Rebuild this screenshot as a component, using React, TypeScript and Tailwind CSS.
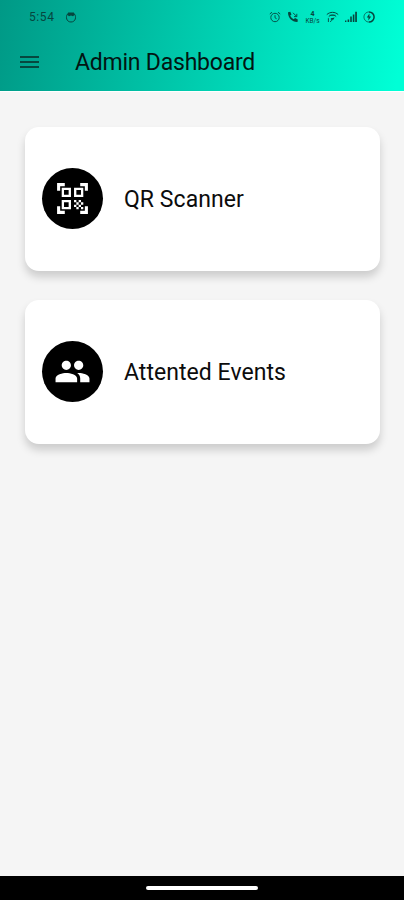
import React from 'react';
import { MdPeople, MdQrCodeScanner } from 'react-icons/md';

const StatusBar: React.FC = () => (
  <div className="flex h-[34px] items-center justify-between pl-[29px] pr-[29px] text-[#06463e]">
    <div className="flex items-center">
      <span className="w-[36px] text-[12px] leading-none tracking-[0.6px]">5:54</span>
      <svg className="h-3 w-3" viewBox="0 0 12 12" fill="none" stroke="currentColor">
        <path d="M2.4 3.2C.6 5.6 1.2 11 6 11s5.4-5.4 3.6-7.8" />
        <path d="M2 3.4 3.2 1.4h5.6L10 3.4 8 5.2 6 4.4 4 5.2z" fill="currentColor" stroke="none" />
      </svg>
    </div>
    <div className="flex items-center gap-[6px]">
      {/* Alarm */}
      <svg className="h-3 w-3" viewBox="0 0 12 12" fill="none" stroke="currentColor" strokeWidth="0.9">
        <circle cx="6" cy="6.5" r="4.2" />
        <path d="M.8 3 3 1.2M11.2 3 9 1.2M6 4.2v2.6l1.6.9" />
      </svg>
      {/* Call */}
      <svg className="h-3 w-3" viewBox="0 0 12 12" fill="none" stroke="currentColor">
        <path d="M1 1.2 3.3.8l1.2 2.6-1.3 1.2c.8 1.7 1.9 2.8 3.5 3.7l1.4-1.2 2.7 1.3-.3 2.6C5.2 11.2.8 6.6 1 1.2z" fill="currentColor" stroke="none" />
        <path d="M6 1.8 9.6 5.4M9.8 2.8v2.8H7" strokeWidth="0.9" />
      </svg>
      {/* Network speed */}
      <div className="flex w-[15px] flex-col items-center leading-none">
        <span className="text-[7px] leading-[7px] font-bold">4</span>
        <span className="text-[6.5px] leading-[6px]">KB/s</span>
      </div>
      {/* Wi-Fi */}
      <svg className="h-3 w-[13px]" viewBox="0 0 13 12" fill="none" stroke="currentColor">
        <path d="M.8 3.6C4 .6 9 .6 12.2 3.6M2.8 5.6c2.2-2 5.2-2 7.4 0" />
        <path d="M3.6 4.2h5.8" strokeWidth="0.8" />
        <path d="M2.4 7.2v3.8M5.4 7v2.6L4.2 11" strokeWidth="0.9" />
        <path d="M5.6 7.2 8.6 6.6 6.8 9.4z" fill="currentColor" stroke="none" />
      </svg>
      {/* Signal */}
      <svg className="h-3 w-3" viewBox="0 0 12 12" fill="currentColor">
        <path d="M0 9.6h1.4V11H0zM2.6 8.4h1.6V11H2.6zM5.2 5.6h1.6V11H5.2zM7.8 3.4h1.6V11H7.8zM10.2.8h1.7V11h-1.7z" />
      </svg>
      {/* Battery */}
      <svg className="h-3 w-3" viewBox="0 0 12 12" fill="none" stroke="currentColor" strokeWidth="1.5">
        <path d="M6 .9a5.1 5.1 0 1 1 0 10.2" />
        <path d="M6 11.1A5.1 5.1 0 0 1 6 .9" strokeWidth="0.7" />
        <path d="M6.4 2.6 3.8 6.4h1.7l-.2 3 2.9-4H6.4z" fill="currentColor" stroke="none" />
      </svg>
    </div>
  </div>
);

const Header: React.FC = () => (
  <header className="h-[91px] shrink-0 bg-[linear-gradient(100deg,#009986_0%,#00ffd6_98%)]">
    <StatusBar />
    <div className="flex h-[56px] items-center pl-5">
      <div className="flex w-[55px] flex-col gap-[3px]">
        <span className="h-[2px] w-[19px] bg-[#06483f]" />
        <span className="h-[2px] w-[19px] bg-[#06483f]" />
        <span className="h-[2px] w-[19px] bg-[#06483f]" />
      </div>
      <h1 className="text-[23px] leading-none tracking-[-0.22px] text-[#021512]">Admin Dashboard</h1>
    </div>
  </header>
);

interface MenuCardProps {
  title: string;
  icon: React.ReactNode;
}

const MenuCard: React.FC<MenuCardProps> = ({ title, icon }) => (
  <div className="flex h-[144px] items-center rounded-[14px] bg-white pb-px pl-[17px] shadow-[0_6px_9px_rgba(0,0,0,0.17)]">
    <div className="flex h-[61px] w-[61px] items-center justify-center rounded-full bg-black text-white">
      {icon}
    </div>
    <span className="ml-[21px] pt-[2px] text-[23px] leading-none tracking-[0.05px] text-[#0c0c0c]">{title}</span>
  </div>
);

const menuItems: MenuCardProps[] = [
  { title: 'QR Scanner', icon: <MdQrCodeScanner size={37} /> },
  { title: 'Attented Events', icon: <MdPeople size={37} /> },
];

const App: React.FC = () => {
  return (
    <div className="flex h-[900px] w-[404px] flex-col overflow-hidden bg-[#f5f5f5] font-['Roboto',sans-serif]">
      <Header />

      <main className="flex flex-1 flex-col gap-[29px] border-t border-white pl-[25px] pr-6 pt-[35px]">
        {menuItems.map((item) => (
          <MenuCard key={item.title} title={item.title} icon={item.icon} />
        ))}
      </main>

      {/* Gesture bar */}
      <footer className="flex h-6 items-center justify-center bg-black">
        <div className="h-1 w-28 rounded-full bg-white" />
      </footer>
    </div>
  );
};

export default App;
